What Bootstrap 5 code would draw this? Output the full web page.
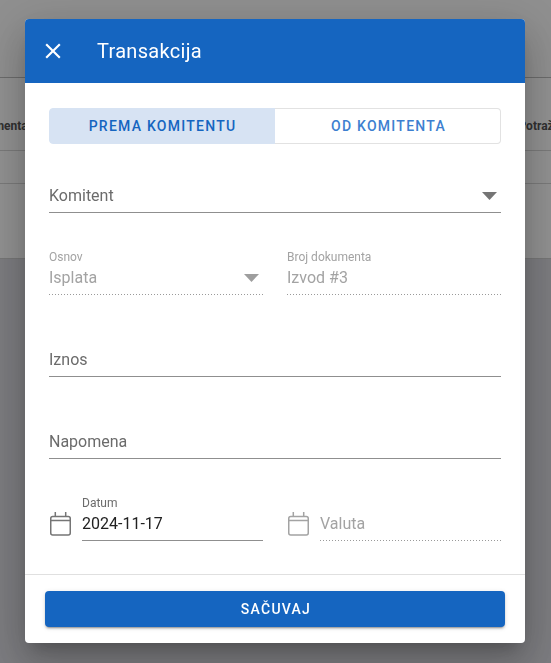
<!doctype html>
<html lang="sr">
<head>
<meta charset="utf-8">
<title>Transakcija</title>
<link href="https://cdn.jsdelivr.net/npm/bootstrap@5.3.0/dist/css/bootstrap.min.css" rel="stylesheet">
<style>
html,body{height:100%;overflow:hidden}
body{font-family:Roboto,"Liberation Sans",sans-serif;background:#dadae0;color:#212121}
.pg-top{background:#fff}
.pg-bar{height:78px;border-bottom:1px solid #bdbdbd;background:#fbfbfb}
.pg-headrow{height:73px;padding-top:24px;border-bottom:1px solid #d6d6d6;font-size:12px;font-weight:700;color:#555;white-space:nowrap}
.pg-left{margin-left:-34px}
.pg-right{margin-right:-19px}
.pg-row{height:33px;border-bottom:1px solid #d6d6d6}
.pg-rest{height:75px;border-bottom:1px solid #d0d0d0}
.modal-backdrop.show{--bs-backdrop-opacity:.43;--bs-backdrop-bg:#000}
.dlg.modal-dialog{width:500px;max-width:500px;margin:19px 0 0 25px}
.dlg .modal-content{height:624px;border:0;border-radius:4px;overflow:hidden;box-shadow:0 11px 15px -7px rgba(0,0,0,.2),0 24px 38px 3px rgba(0,0,0,.14),0 9px 46px 8px rgba(0,0,0,.12)}
.dlg-head.modal-header{height:64px;flex:none;background:#1565c0;color:#fff;padding:0 0 0 15px;border:0;border-radius:0;justify-content:flex-start;gap:31px}
.dlg-title{font-size:20px;font-weight:400;letter-spacing:.3px;line-height:24px;margin:0}
.dlg-x{display:block;background:none;border:0;padding:0;line-height:0}
.dlg-body.modal-body{padding:25px 24px 0;flex:1 1 auto}
.seg.btn-group{width:452px;height:36px;display:flex;margin-bottom:21px}
.seg .btn{font-size:14px;font-weight:500;letter-spacing:1.25px;line-height:20px;padding:7px 8px;border:1px solid #e2e2e2;border-radius:4px;text-transform:uppercase}
.seg .seg-on{flex:0 0 227px;background:#d7e3f3;color:#1565c0;border-color:#d7e3f3;border-top-right-radius:0;border-bottom-right-radius:0}
.seg .seg-off{flex:1 1 auto;background:#fff;color:#3d7fd0;margin-left:0;border-left:0;padding-left:10px;border-top-left-radius:0;border-bottom-left-radius:0}
.fld{height:48px;display:flex;flex-direction:column;justify-content:flex-end;margin-bottom:34px;border-bottom:1px solid #8f8f8f;padding-bottom:4px}
.fld-off{border-bottom:0;background:linear-gradient(to right,#9a9a9a 33%,transparent 0) left bottom/3px 1px repeat-x;padding-bottom:5px}
.fld-lab{font-size:12px;line-height:16px;color:#6b6b6b;margin-bottom:1px}
.fld-val{font-size:16px;line-height:24px;color:#6b6b6b}
.fld-off .fld-lab,.fld-off .fld-val{color:#a3a3a3}
.fld .fld-dark{color:#212121}
.fld-car{margin-right:4px;flex:none}
.cal-ico{flex:none;margin-right:9px;align-self:flex-start;margin-top:19px}
.cal-wrap{height:48px}
.cal-wrap .fld{flex:1 1 auto;margin:0}
.rw.row{margin-bottom:0}
.dlg-foot.modal-footer{height:69px;flex:none;padding:16px 20px;border-top:1px solid #e0e0e0;border-radius:0;display:block}
.dlg-foot .btn{display:block;width:100%;margin:0;height:36px;background:#1565c0;color:#fff;border:0;border-radius:4px;font-size:14px;font-weight:500;letter-spacing:1.25px;line-height:20px;padding:8px 8px 8px 10px;box-shadow:0 3px 1px -2px rgba(0,0,0,.2),0 2px 2px 0 rgba(0,0,0,.14),0 1px 5px 0 rgba(0,0,0,.12)}
</style>
</head>
<body>
<div class="pg-top">
  <div class="pg-bar"></div>
  <div class="pg-headrow d-flex align-items-center justify-content-between">
    <span class="pg-left">Dokumenta</span>
    <span class="pg-right">Potražuje</span>
  </div>
  <div class="pg-row"></div>
  <div class="pg-rest"></div>
</div>

<div class="modal-backdrop show"></div>

<div class="modal d-block" role="dialog" aria-modal="true">
  <div class="modal-dialog dlg">
    <div class="modal-content">
      <div class="modal-header dlg-head">
        <button type="button" class="dlg-x" aria-label="Zatvori">
          <svg width="26" height="26" viewBox="0 0 24 24" fill="#fff"><path d="M19 6.41 17.59 5 12 10.59 6.41 5 5 6.41 10.59 12 5 17.59 6.41 19 12 13.41 17.59 19 19 17.59 13.41 12z"/></svg>
        </button>
        <h5 class="dlg-title">Transakcija</h5>
      </div>
      <div class="modal-body dlg-body">
        <div class="btn-group seg" role="group">
          <button type="button" class="btn seg-on">Prema komitentu</button>
          <button type="button" class="btn seg-off">Od komitenta</button>
        </div>

        <div class="fld">
          <div class="fld-val d-flex justify-content-between align-items-center">
            <span>Komitent</span>
            <svg class="fld-car" width="15" height="8" viewBox="0 0 15 8" fill="#757575"><path d="M0 0h15L7.500 8z"/></svg>
          </div>
        </div>

        <div class="row gx-4 rw">
          <div class="col-6">
            <div class="fld fld-off">
              <div class="fld-lab">Osnov</div>
              <div class="fld-val d-flex justify-content-between align-items-center">
                <span>Isplata</span>
                <svg class="fld-car" width="15" height="8" viewBox="0 0 15 8" fill="#9e9e9e"><path d="M0 0h15L7.500 8z"/></svg>
              </div>
            </div>
          </div>
          <div class="col-6">
            <div class="fld fld-off">
              <div class="fld-lab">Broj dokumenta</div>
              <div class="fld-val">Izvod #3</div>
            </div>
          </div>
        </div>

        <div class="fld"><div class="fld-val">Iznos</div></div>
        <div class="fld"><div class="fld-val">Napomena</div></div>

        <div class="row gx-4 rw">
          <div class="col-6">
            <div class="d-flex cal-wrap">
              <svg class="cal-ico" width="24" height="24" viewBox="0 0 24 24" fill="none" stroke="#757575" stroke-width="1.500"><rect x="1.750" y="4.500" width="19.500" height="18.500" rx="2"/><path d="M1.750 8.500h19.500M6.300 0v4.500M16.700 0v4.500"/></svg>
              <div class="fld">
                <div class="fld-lab">Datum</div>
                <div class="fld-val fld-dark">2024-11-17</div>
              </div>
            </div>
          </div>
          <div class="col-6">
            <div class="d-flex cal-wrap">
              <svg class="cal-ico" width="24" height="24" viewBox="0 0 24 24" fill="none" stroke="#a3a3a3" stroke-width="1.500"><rect x="1.750" y="4.500" width="19.500" height="18.500" rx="2"/><path d="M1.750 8.500h19.500M6.300 0v4.500M16.700 0v4.500"/></svg>
              <div class="fld fld-off">
                <div class="fld-val">Valuta</div>
              </div>
            </div>
          </div>
        </div>
      </div>
      <div class="modal-footer dlg-foot">
        <button type="button" class="btn">SAČUVAJ</button>
      </div>
    </div>
  </div>
</div>
<script src="https://cdn.jsdelivr.net/npm/bootstrap@5.3.0/dist/js/bootstrap.bundle.min.js"></script>
</body>
</html>
